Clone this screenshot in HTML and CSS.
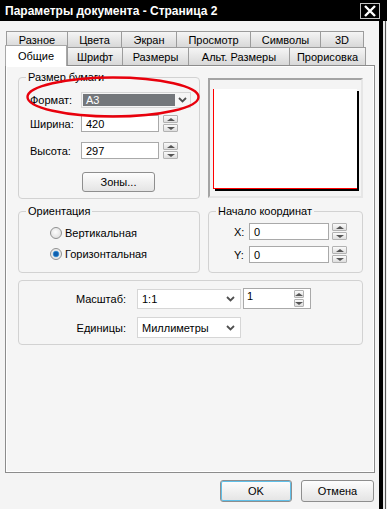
FILE: index.html
```html
<!DOCTYPE html>
<html lang="ru">
<head>
    <meta charset="UTF-8">
    <meta name="viewport" content="width=device-width, initial-scale=1.0">
    <title>Параметры документа - Страница 2</title>
    <link rel="stylesheet" href="styles.css">
</head>
<body>

<div class="window">
    <div class="titlebar">
        <span class="title">Параметры документа - Страница 2</span>
        <span class="close">
            <svg width="14" height="12" viewBox="0 0 14 12"><path d="M2 1 L12 11 M12 1 L2 11" stroke="#fff" stroke-width="2.4" fill="none"/></svg>
        </span>
    </div>

    <div class="main">
        <div class="dialog">
            <div class="tabs">
                <div class="tab-row back">
                    <div class="tab">Разное</div>
                    <div class="tab">Цвета</div>
                    <div class="tab">Экран</div>
                    <div class="tab">Просмотр</div>
                    <div class="tab">Символы</div>
                    <div class="tab">3D</div>
                </div>
                <div class="tab-row front">
                    <div class="tab active">Общие</div>
                    <div class="tab">Шрифт</div>
                    <div class="tab">Размеры</div>
                    <div class="tab">Альт. Размеры</div>
                    <div class="tab">Прорисовка</div>
                </div>
            </div>

            <div class="panel">
                <div class="group-row">
                    <fieldset class="group paper">
                        <legend>Размер бумаги</legend>
                        <div class="field format">
                            <label>Формат:</label>
                            <div class="combo dark">
                                <span class="value">А3</span>
                                <span class="arrow"><svg width="9" height="6" viewBox="0 0 9 6"><path d="M1 1 L4.5 4.5 L8 1" stroke="#505050" stroke-width="1.8" fill="none"/></svg></span>
                            </div>
                        </div>
                        <div class="field width">
                            <label>Ширина:</label>
                            <div class="input">420</div>
                            <div class="spin"><span class="up"></span><span class="down"></span></div>
                        </div>
                        <div class="field height">
                            <label>Высота:</label>
                            <div class="input">297</div>
                            <div class="spin"><span class="up"></span><span class="down"></span></div>
                        </div>
                        <button class="btn zones">Зоны...</button>
                    </fieldset>
                    <div class="preview">
                        <div class="sheet"></div>
                    </div>
                </div>

                <div class="group-row mid">
                    <fieldset class="group orient">
                        <legend>Ориентация</legend>
                        <div class="radio-row"><span class="radio"></span>Вертикальная</div>
                        <div class="radio-row"><span class="radio on"></span>Горизонтальная</div>
                    </fieldset>
                    <fieldset class="group origin">
                        <legend>Начало координат</legend>
                        <div class="field">
                            <label>X:</label>
                            <div class="input">0</div>
                            <div class="spin"><span class="up"></span><span class="down"></span></div>
                        </div>
                        <div class="field">
                            <label>Y:</label>
                            <div class="input">0</div>
                            <div class="spin"><span class="up"></span><span class="down"></span></div>
                        </div>
                    </fieldset>
                </div>

                <fieldset class="group scale">
                    <div class="scale-row first">
                        <label>Масштаб:</label>
                        <div class="combo">
                            <span class="value">1:1</span>
                            <span class="arrow"><svg width="9" height="6" viewBox="0 0 9 6"><path d="M1 1 L4.5 4.5 L8 1" stroke="#505050" stroke-width="1.8" fill="none"/></svg></span>
                        </div>
                        <div class="input spin-input">
                            <span>1</span>
                            <div class="spin"><span class="up"></span><span class="down"></span></div>
                        </div>
                    </div>
                    <div class="scale-row">
                        <label>Единицы:</label>
                        <div class="combo">
                            <span class="value">Миллиметры</span>
                            <span class="arrow"><svg width="9" height="6" viewBox="0 0 9 6"><path d="M1 1 L4.5 4.5 L8 1" stroke="#505050" stroke-width="1.8" fill="none"/></svg></span>
                        </div>
                    </div>
                </fieldset>
            </div>

            <div class="footer">
                <button class="btn ok">OK</button>
                <button class="btn cancel">Отмена</button>
            </div>

            <!-- red mark drawn over the format field -->
            <svg class="mark" width="180" height="46" viewBox="0 0 180 46">
                <ellipse cx="88" cy="22" rx="85.5" ry="19.5" stroke="#e8000c" stroke-width="2.4" fill="none"/>
            </svg>
        </div>
        <div class="edge"></div>
    </div>
</div>

</body>
</html>
```

FILE: styles.css
```css
* {
    box-sizing: border-box;
}
body {
    margin: 0;
    width: 387px;
    height: 509px;
    overflow: hidden;
    background: #f4f4f4;
    font-family: "Liberation Sans", Arial, sans-serif;
    font-size: 11px;
    color: #000;
}
.window {
    height: 509px;
}
.titlebar {
    height: 21px;
    background: #000;
    display: flex;
    align-items: center;
    justify-content: space-between;
    padding: 0 7px 0 5px;
}
.title {
    color: #fff;
    font-weight: bold;
    font-size: 12px;
}
.close {
    width: 20px;
    height: 16px;
    border: 1px solid #c4c4c4;
    display: flex;
    align-items: center;
    justify-content: center;
}
.main {
    display: flex;
    height: 488px;
}
.dialog {
    position: relative;
    width: 379px;
    padding: 10px 4px 0 5px;
}
.edge {
    flex: 1;
    background: linear-gradient(to right, #000 0 4px, #e9e9e9 4px 6px, #555 6px 7px, #eee 7px);
}

/* tabs */
.tab-row {
    display: flex;
}
.tab-row.back {
    margin-left: 1px;
}
.tab-row.front {
    margin-top: -1px;
    height: 18px;
}
.tab {
    height: 17px;
    border: 1px solid #9c9c9c;
    background: linear-gradient(#f5f5f5, #d8d8d8);
    display: flex;
    align-items: center;
    justify-content: center;
    margin-left: -1px;
}
.tab:first-child {
    margin-left: 0;
}
.back .tab:nth-child(1) { width: 62px; }
.back .tab:nth-child(2) { width: 55px; }
.back .tab:nth-child(3) { width: 56px; }
.back .tab:nth-child(4) { width: 75px; }
.back .tab:nth-child(5) { width: 71px; }
.back .tab:nth-child(6) { width: 44px; }
.front .tab {
    height: 18px;
    border-bottom: none;
}
.front .tab:nth-child(1) { width: 62px; }
.front .tab:nth-child(2) { width: 56px; margin-left: 0; }
.front .tab:nth-child(3) { width: 67px; }
.front .tab:nth-child(4) { width: 102px; }
.front .tab:nth-child(5) { width: 77px; }
.tab.active {
    position: relative;
    z-index: 2;
    height: 21px;
    margin-top: -2px;
    background: #fff;
    border-color: #a8a8a8;
}

/* panel */
.panel {
    height: 408px;
    border: 1px solid #8c8c8c;
    box-shadow: inset 0 0 0 1px #fff;
    background: #f5f5f5;
    padding: 5px 11px 0 12px;
}
.group-row {
    display: flex;
    justify-content: space-between;
}
.group-row.mid {
    margin-top: 6px;
}
.group {
    margin: 0;
    min-width: 0;
    border: 1px solid #d2d2d2;
    border-radius: 4px;
    padding: 0;
}
legend {
    padding: 0 2px;
    line-height: 13px;
}
.field {
    display: flex;
    align-items: center;
}
.field label {
    width: 51px;
}
.input {
    height: 17px;
    border: 1px solid #a9a9a9;
    background: #fff;
    padding-left: 4px;
    display: flex;
    align-items: center;
}
.spin {
    display: flex;
    flex-direction: column;
    gap: 1px;
    width: 15px;
}
.spin span {
    height: 8px;
    border: 1px solid #b2b2b2;
    border-radius: 1px;
    background: linear-gradient(#fafafa, #dedede);
    display: flex;
    align-items: center;
    justify-content: center;
}
.spin .up::before {
    content: "";
    border-left: 4px solid transparent;
    border-right: 4px solid transparent;
    border-bottom: 3px solid #555;
}
.spin .down::before {
    content: "";
    border-left: 4px solid transparent;
    border-right: 4px solid transparent;
    border-top: 3px solid #555;
}

/* paper size */
.paper {
    width: 182px;
    padding: 8px 8px 6px 11px;
}
.paper legend {
    margin-left: -4px;
}
.paper .field.format {
    height: 16px;
    margin-bottom: 7px;
}
.paper .field.width {
    margin-bottom: 10px;
}
.paper .field.height {
    margin-bottom: 13px;
}
.paper .input {
    width: 78px;
}
.paper .spin {
    margin-left: 4px;
}
.combo {
    display: flex;
    border: 1px solid #d6d6d6;
    background: #fff;
}
.combo .value {
    flex: 1;
    display: flex;
    align-items: center;
    padding-left: 4px;
}
.combo .arrow {
    width: 15px;
    display: flex;
    align-items: center;
    justify-content: center;
}
.combo.dark {
    width: 110px;
    height: 16px;
    padding: 1px 0 1px 1px;
    background: #f6f6f6;
}
.combo.dark .value {
    background: #74777b;
    color: #fff;
    padding-left: 3px;
}
.btn {
    font-family: inherit;
    font-size: 11px;
    color: #000;
    border: 1px solid #8e8e8e;
    border-radius: 3px;
    background: linear-gradient(#fdfdfd, #e4e4e4);
    padding: 0;
}
.zones {
    display: block;
    width: 73px;
    height: 20px;
    margin-left: 52px;
}
.preview {
    width: 155px;
    height: 120px;
    margin-top: 7px;
    border: 2px solid;
    border-color: #a4a4a4 #e6e6e6 #e6e6e6 #a4a4a4;
    background: #f4f4f4;
    padding: 9px 0 0 3px;
}
.sheet {
    width: 144px;
    height: 100px;
    background: #fff;
    border-left: 1px solid #f00;
    border-bottom: 1px solid #f00;
    box-shadow: 2px 2px 0 #000;
}

/* orientation */
.orient {
    width: 182px;
    padding: 8px 0 11px 31px;
}
.orient legend {
    margin-left: -24px;
}
.radio-row {
    display: flex;
    align-items: center;
    gap: 3px;
    height: 14px;
}
.radio-row + .radio-row {
    margin-top: 7px;
}
.radio {
    width: 12px;
    height: 12px;
    border-radius: 50%;
    border: 1px solid #8f9090;
    background: radial-gradient(circle at 45% 40%, #fdfdfd, #d6d6d6);
}
.radio.on {
    background: radial-gradient(circle, #0f5fae 0 2px, #56a6de 3px, #e6e6e6 3.6px, #f8f8f8 100%);
}

/* origin */
.origin {
    width: 155px;
    padding: 5px 0 9px 25px;
}
.origin legend {
    margin-left: -18px;
}
.origin .field + .field {
    margin-top: 6px;
}
.origin label {
    width: 15px;
}
.origin .input {
    width: 80px;
}
.origin .spin {
    margin-left: 3px;
}

/* scale */
.scale {
    margin-top: 7px;
    height: 65px;
    padding: 7px 0 0 0;
}
.scale-row {
    display: flex;
    align-items: center;
}
.scale-row.first {
    margin-bottom: 8px;
}
.scale-row label {
    width: 107px;
    text-align: right;
    margin-right: 11px;
}
.scale .combo {
    width: 104px;
    height: 20px;
}
.scale-row:last-child .combo {
    height: 21px;
}
.scale .combo .arrow {
    width: 20px;
}
.spin-input {
    width: 68px;
    height: 21px;
    margin-left: 2px;
    justify-content: space-between;
    padding: 0 1px 0 3px;
}
.spin-input span {
    align-self: flex-start;
    line-height: 15px;
}

/* footer */
.footer {
    display: flex;
    justify-content: flex-end;
    gap: 9px;
    padding: 7px 1px 0 0;
}
.footer .btn {
    height: 22px;
}
.ok {
    width: 72px;
    box-shadow: inset 0 0 0 1px #5fbfe8;
}
.cancel {
    width: 73px;
}

.mark {
    position: absolute;
    left: 25px;
    top: 54px;
}
```
